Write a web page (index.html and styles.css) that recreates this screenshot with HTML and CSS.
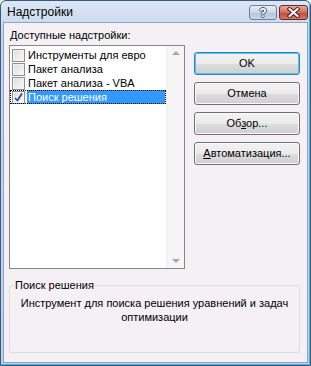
FILE: index.html
```html
<!DOCTYPE html>
<html lang="ru">
<head>
    <meta charset="UTF-8">
    <title>Надстройки</title>
    <link rel="stylesheet" href="styles.css">
</head>
<body>
    <div class="window">
        <!-- Title bar -->
        <div class="titlebar">
            <span class="title">Надстройки</span>
            <div class="caption-btns">
                <span class="cbtn help">?</span>
                <span class="cbtn close">
                    <svg width="13" height="11" viewBox="0 0 13 11">
                        <path d="M2.5 2 L10.5 9 M10.5 2 L2.5 9" stroke="#4a1f1f" stroke-width="4" stroke-linecap="square"/>
                        <path d="M2.5 2 L10.5 9 M10.5 2 L2.5 9" stroke="#ffffff" stroke-width="2" stroke-linecap="square"/>
                    </svg>
                </span>
            </div>
        </div>

        <div class="client">
            <div class="top">
                <div class="left">
                    <div class="label"><u>Д</u>оступные надстройки:</div>
                    <div class="listbox">
                        <div class="items">
                            <div class="row"><span class="check"></span><span class="text">Инструменты для евро</span></div>
                            <div class="row"><span class="check"></span><span class="text">Пакет анализа</span></div>
                            <div class="row"><span class="check"></span><span class="text">Пакет анализа - VBA</span></div>
                            <div class="row selected"><span class="check checked">
                                <svg width="9" height="9" viewBox="0 0 9 9"><path d="M1 5 L3.5 7.5 L8 0.5" fill="none" stroke="#2d3f8f" stroke-width="1.6"/></svg>
                            </span><span class="text">Поиск решения</span></div>
                        </div>
                        <div class="scrollbar">
                            <span class="arrow up"></span>
                            <span class="arrow down"></span>
                        </div>
                    </div>
                </div>
                <div class="buttons">
                    <div class="button default">OK</div>
                    <div class="button">Отмена</div>
                    <div class="button">Об<u>з</u>ор...</div>
                    <div class="button"><u>А</u>втоматизация...</div>
                </div>
            </div>

            <fieldset class="group">
                <legend>Поиск решения</legend>
                <p>Инструмент для поиска решения уравнений и задач оптимизации</p>
            </fieldset>
        </div>
    </div>
</body>
</html>
```

FILE: styles.css
```css
body {
    margin: 0;
    font-family: "Liberation Sans", Arial, sans-serif;
    font-size: 11px;
    color: #000;
}
.window {
    width: 311px;
    height: 366px;
    box-sizing: border-box;
    border: 1px solid #3b5a80;
    border-radius: 6px 6px 0 0;
    background: linear-gradient(#dbe6f4, #c6d7ec 30px, #bcd2ec);
    padding: 0 2px 2px;
    display: flex;
    flex-direction: column;
    box-shadow: inset -1px -1px 0 #3cb4e6;
}
/* Title bar */
.titlebar {
    height: 21px;
    display: flex;
    align-items: center;
    padding-left: 4px;
}
.title {
    font-size: 12px;
    flex: 1;
    padding-top: 1px;
}
.caption-btns {
    display: flex;
    gap: 2px;
    margin-right: 0;
    margin-top: 2px;
}
.cbtn {
    height: 13px;
    width: 26px;
    border: 1px solid #6d7f99;
    border-radius: 3px;
    display: flex;
    align-items: center;
    justify-content: center;
}
.help {
    background: linear-gradient(#e6eef8, #c9d6e8 50%, #b4c5dc 51%, #c6d5e9);
    color: #fff;
    font-weight: bold;
    font-size: 12px;
    text-shadow: 1px 0 #46566e, -1px 0 #46566e, 0 1px #46566e, 0 -1px #46566e;
}
.close {
    width: 27px;
    border-color: #6e2a22;
    background: linear-gradient(#e7a99c, #cf6d5c 50%, #bf4a36 51%, #d57863);
}
/* Client area */
.client {
    flex: 1;
    background: #f4f0f4;
    border: 1px solid #8fa4c0;
    padding: 6px 7px 9px 5px;
    display: flex;
    flex-direction: column;
}
.top {
    display: flex;
    gap: 9px;
}
.left {
    width: 176px;
}
.label {
    height: 13px;
    line-height: 13px;
    padding-left: 1px;
    margin-bottom: 3px;
}
.listbox {
    height: 224px;
    box-sizing: border-box;
    border: 1px solid #828790;
    background: #fff;
    display: flex;
}
.items {
    flex: 1;
    padding-top: 2px;
}
.row {
    height: 14px;
    display: flex;
    align-items: center;
    box-sizing: border-box;
}
.check {
    width: 13px;
    height: 13px;
    box-sizing: border-box;
    border: 1px solid #8f8f8f;
    margin-left: 2px;
    margin-right: 2px;
    background: linear-gradient(135deg, #dcdcdc, #fbfbfb);
    box-shadow: inset 0 0 0 1px #f4f4f4;
    display: flex;
    align-items: center;
    justify-content: center;
}
.text {
    flex: 1;
    height: 14px;
    line-height: 14px;
    padding-left: 1px;
    white-space: nowrap;
}
.selected {
    outline: 1px dotted #000;
    outline-offset: -1px;
}
.selected .text {
    background: #3399ff;
    color: #fff;
    margin-right: 1px;
}
.scrollbar {
    width: 17px;
    background: #f5f5f5;
    border-left: 1px solid #ececec;
    display: flex;
    flex-direction: column;
    justify-content: space-between;
    align-items: center;
    padding: 5px 0;
}
.arrow {
    width: 0;
    height: 0;
    border-left: 4px solid transparent;
    border-right: 4px solid transparent;
}
.arrow.up {
    border-bottom: 4px solid #a8a8a8;
}
.arrow.down {
    border-top: 4px solid #a8a8a8;
}
/* Buttons */
.buttons {
    padding-top: 23px;
    display: flex;
    flex-direction: column;
    gap: 7px;
}
.button {
    width: 106px;
    height: 23px;
    box-sizing: border-box;
    border: 1px solid #707070;
    border-radius: 3px;
    background: linear-gradient(#f2f2f2, #ebebeb 50%, #dddddd 51%, #cfcfcf);
    box-shadow: inset 0 0 0 1px #fbfbfb;
    text-align: center;
    line-height: 21px;
}
.button.default {
    border-color: #3c7fb1;
    box-shadow: inset 0 0 0 1px #48c8f8;
}
/* Group box */
.group {
    margin: 10px 0 0;
    padding: 0 4px;
    height: 74px;
    box-sizing: border-box;
    border: 1px solid #d5dfe5;
    border-radius: 3px;
    min-width: 0;
}
.group legend {
    padding: 0 1px;
    line-height: 13px;
}
.group p {
    margin: 4px 0 0;
    text-align: center;
    line-height: 14px;
}
```
